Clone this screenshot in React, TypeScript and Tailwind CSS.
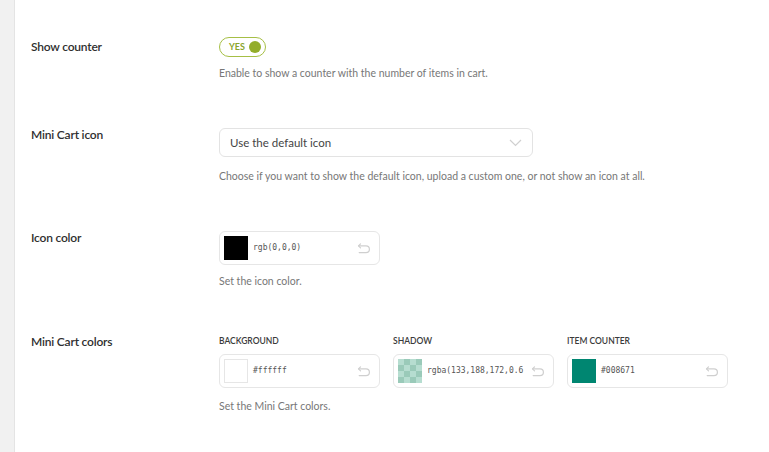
import React from "react";

const font = "font-['Lato','Open_Sans',sans-serif]";

function UndoIcon() {
  return (
    <svg width="14" height="11" viewBox="0 0 14 11" fill="none" stroke="#cfcfcf" strokeWidth="1.2" strokeLinecap="round" strokeLinejoin="round">
      <path d="M3.5 0.8 1.5 2.8l2 2" />
      <path d="M1.6 2.8h7.4a3.4 3.4 0 0 1 0 6.8H2.2" />
    </svg>
  );
}

function ColorField({ swatch, value }: { swatch: React.ReactNode; value: string }) {
  return (
    <div className="flex h-[34px] w-[161px] items-center rounded-[6px] border border-[#e6e6e6] bg-white pl-[4px] pr-[8px]">
      {swatch}
      <span className="ml-[5px] whitespace-nowrap font-['DejaVu_Sans_Mono',monospace] text-[8px] text-[#555]">
        {value}
      </span>
      <span className="ml-auto flex-shrink-0 pl-[3px]">
        <UndoIcon />
      </span>
    </div>
  );
}

function Row({ label, children, className = "" }: { label: string; children: React.ReactNode; className?: string }) {
  return (
    <div className={`flex items-start ${className}`}>
      <div className="w-[188px] flex-shrink-0 text-[12px] font-semibold leading-[20px] tracking-[-0.2px] text-[#2f2f2f]">{label}</div>
      <div className="flex-1">{children}</div>
    </div>
  );
}

const Desc = ({ children, className = "" }: { children: React.ReactNode; className?: string }) => (
  <p className={`text-[10.5px] leading-[16px] text-[#777] ${className}`}>{children}</p>
);

export default function App() {
  return (
    <div className={`flex h-[452px] w-[769px] overflow-hidden bg-white ${font}`}>
      <div className="w-[15px] flex-shrink-0 border-r border-[#e4e4e4] bg-[#f1f1f1]" />
      <div className="flex-1 pl-[16px] pt-[37px]">
        <Row label="Show counter">
          <div className="flex h-[20px] w-[47px] items-center justify-between rounded-full border border-[#a6bf45] pl-[9px] pr-[4px]">
            <span className="text-[9px] font-bold text-[#8aa52b]">YES</span>
            <span className="h-[12px] w-[12px] rounded-full bg-[#93ad2a]" />
          </div>
          <Desc className="mt-[8px]">Enable to show a counter with the number of items in cart.</Desc>
        </Row>

        <Row label="Mini Cart icon" className="mt-[44px]">
          <div className="mt-[3px] flex h-[29px] w-[314px] items-center justify-between rounded-[6px] border border-[#e3e3e3] pl-[10px] pr-[10px]">
            <span className="text-[11.5px] text-[#444]">Use the default icon</span>
            <svg width="13" height="8" viewBox="0 0 13 8" fill="none" stroke="#d0d0d0" strokeWidth="1.2">
              <path d="M1 1l5.5 5.5L12 1" />
            </svg>
          </div>
          <Desc className="mt-[11px]">
            Choose if you want to show the default icon, upload a custom one, or not show an icon at all.
          </Desc>
        </Row>

        <Row label="Icon color" className="mt-[44px]">
          <div className="mt-[3px]">
            <ColorField swatch={<span className="h-[24px] w-[24px] flex-shrink-0 bg-black" />} value="rgb(0,0,0)" />
          </div>
          <Desc className="mt-[8px]">Set the icon color.</Desc>
        </Row>

        <Row label="Mini Cart colors" className="mt-[43px]">
          <div className="mt-[2px] flex gap-[13px]">
            <div>
              <div className="mb-[6px] text-[8.5px] font-semibold leading-[14px] text-[#3a3a3a]">BACKGROUND</div>
              <ColorField
                swatch={<span className="h-[24px] w-[24px] flex-shrink-0 border border-[#e6e6e6] bg-white" />}
                value="#ffffff"
              />
            </div>
            <div>
              <div className="mb-[6px] text-[8.5px] font-semibold leading-[14px] text-[#3a3a3a]">SHADOW</div>
              <ColorField
                swatch={
                  <span className="h-[24px] w-[24px] flex-shrink-0 bg-[conic-gradient(#9acab9_25%,#b6ddd0_0_50%,#9acab9_0_75%,#b6ddd0_0)] bg-[length:12px_12px]" />
                }
                value="rgba(133,188,172,0.6"
              />
            </div>
            <div>
              <div className="mb-[6px] text-[8.5px] font-semibold leading-[14px] text-[#3a3a3a]">ITEM COUNTER</div>
              <ColorField swatch={<span className="h-[24px] w-[24px] flex-shrink-0 bg-[#008671]" />} value="#008671" />
            </div>
          </div>
          <Desc className="mt-[10px]">Set the Mini Cart colors.</Desc>
        </Row>
      </div>
    </div>
  );
}
